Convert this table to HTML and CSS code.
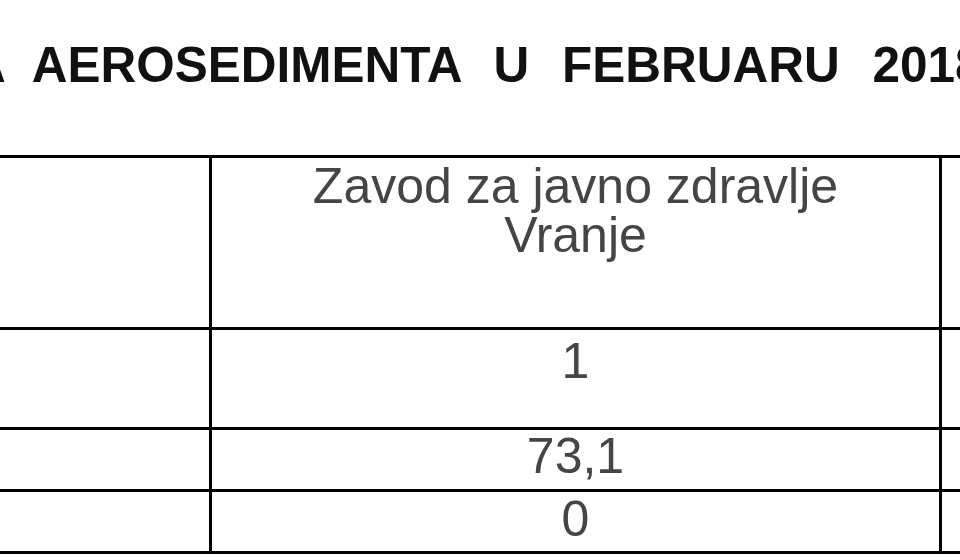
FILE: index.html
```html
<!DOCTYPE html>
<html lang="sr">
<head>
<meta charset="utf-8">
<title>Aerosediment februar 2018</title>
<link rel="stylesheet" href="styles.css">
</head>
<body>
<div class="page">
  <h1 class="title"><span class="cut">A </span>AEROSEDIMENTA U FEBRUARU 2018. GODINE</h1>
  <div class="table">
    <div class="cell head"></div>
    <div class="cell head mid">Zavod za javno zdravlje<br>Vranje</div>
    <div class="cell head"></div>

    <div class="cell r2"></div>
    <div class="cell r2 mid">1</div>
    <div class="cell r2"></div>

    <div class="cell r3"></div>
    <div class="cell r3 mid">73,1</div>
    <div class="cell r3"></div>

    <div class="cell r4"></div>
    <div class="cell r4 mid">0</div>
    <div class="cell r4"></div>
  </div>
</div>
</body>
</html>
```

FILE: styles.css
```css
html, body {
  margin: 0;
  padding: 0;
  background: #ffffff;
  overflow: hidden;
  width: 960px;
  height: 560px;
}

.page {
  width: 960px;
  height: 560px;
  overflow: hidden;
  font-family: "Liberation Sans", Arial, sans-serif;
}

.title {
  margin: 37px 0 0 -30px;
  font-size: 49.5px;
  line-height: 56px;
  font-weight: bold;
  color: #111111;
  word-spacing: 19px;
  white-space: nowrap;
}

.cut {
  word-spacing: 14px;
}

.table {
  margin: 62px 0 0 -41px;
  display: grid;
  grid-template-columns: 250px 727px 250px;
  grid-template-rows: 169px 97px 59px 59px;
  gap: 3px;
  padding: 3px 0;
  background: #000000;
  width: max-content;
}

.cell {
  background: #ffffff;
  color: #454545;
  font-size: 50px;
  line-height: 47px;
  text-align: center;
}

.head {
  padding-top: 4px;
  line-height: 49px;
}
.r2 { padding-top: 8px; }
.r3 { padding-top: 3px; }
.r4 { padding-top: 4px; }
```
